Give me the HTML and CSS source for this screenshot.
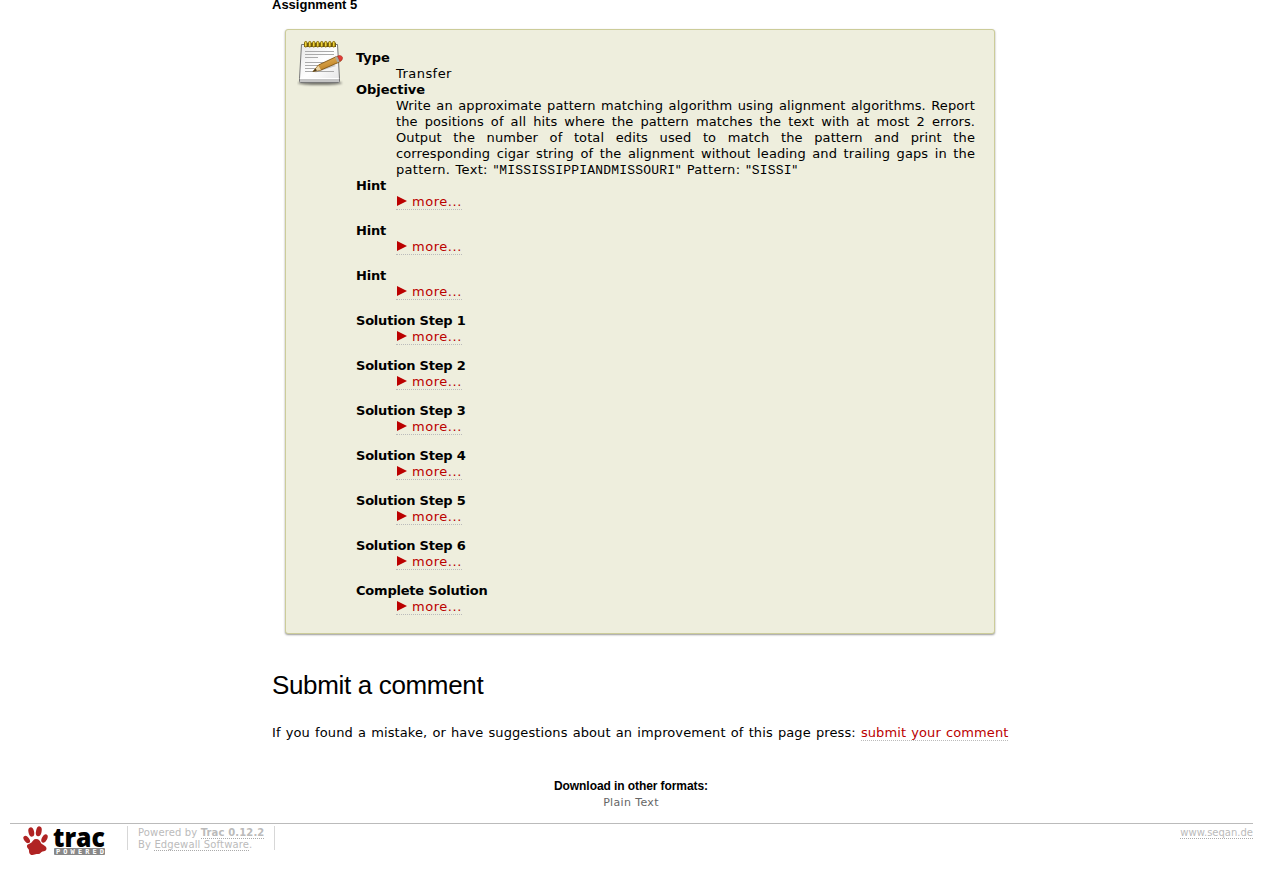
FILE: index.html
```html
<!DOCTYPE html>
<html lang="en">
<head>
<meta charset="utf-8">
<title>Assignment 5</title>
<link rel="stylesheet" href="styles.css">
</head>
<body>
<main class="content">
  <h4 class="assignment-title">Assignment 5</h4>
  <section class="box">
    <svg class="note" width="48" height="48" viewBox="0 0 48 48">
      <defs>
        <linearGradient id="paper" x1="0" y1="0" x2="1" y2="1"><stop offset="0" stop-color="#e6e6e6"/><stop offset=".5" stop-color="#fff"/><stop offset="1" stop-color="#e4e4e4"/></linearGradient>
        <linearGradient id="wood" x1="0" y1="0" x2=".5" y2="1"><stop offset="0" stop-color="#efc069"/><stop offset="1" stop-color="#b87a1d"/></linearGradient>
        <filter id="soft" x="-20%" y="-80%" width="140%" height="260%"><feGaussianBlur stdDeviation="1"/></filter>
      </defs>
      <ellipse cx="23" cy="43" rx="22" ry="2" fill="#000" opacity=".5" filter="url(#soft)"/>
      <path d="M4.500 4.500h36l2 34v3q0 1-1 1h-38q-1 0-1-1v-3z" fill="url(#paper)" stroke="#777"/>
      <path d="M3 39h39v3H3z" fill="#c4c4c4"/>
      <path d="M3.500 38.500h38" stroke="#fff"/>
      <path d="M8 11.500h29M8 14.500h29M8 17.500h13M8 22.500h23M8 25.500h18M8 28.500h12M8 31.500h29" stroke="#aaa"/>
      <path d="M7 3h32v4H7z" fill="#604d10"/>
      <g fill="#f0d43a" stroke="#81680c" stroke-width="1">
        <rect x="7.500" y="1.500" width="2.500" height="5.500" rx="1.200"/><rect x="11.500" y="1.500" width="2.500" height="5.500" rx="1.200"/><rect x="15.500" y="1.500" width="2.500" height="5.500" rx="1.200"/><rect x="19.500" y="1.500" width="2.500" height="5.500" rx="1.200"/><rect x="23.500" y="1.500" width="2.500" height="5.500" rx="1.200"/><rect x="27.500" y="1.500" width="2.500" height="5.500" rx="1.200"/><rect x="31.500" y="1.500" width="2.500" height="5.500" rx="1.200"/><rect x="35.500" y="1.500" width="2.500" height="5.500" rx="1.200"/>
      </g>
      <path d="M17 33l22-7-4-2z" fill="#000" opacity=".18"/>
      <path d="M16 31.500l5.500-6.500 18-8.500q4-1 5 1.500 .5 2.500-2 4L24 30z" fill="url(#wood)" stroke="#805514" stroke-width=".9"/>
      <path d="M16 31.500l5.500-6 2.500 4.500z" fill="#ead3a2"/>
      <path d="M15.500 32l3-3.500 1.500 2z" fill="#4c3a18"/>
      <path d="M38 17l2.500-.9 2.300 5.400-2.500 1z" fill="#aaa9a0"/>
      <path d="M40.500 16q4-1.300 5 1.500 .5 2.600-2.600 3.800z" fill="#e13a37" stroke="#a32" stroke-width=".6"/>
    </svg>
    <dl class="steps">
      <dt class="wide">Type</dt><dd class="type">Transfer</dd>
      <dt class="wide">Objective</dt>
      <dd class="objective">
        <span class="line">Write an approximate pattern matching algorithm using alignment algorithms. Report</span>
        <span class="line">the positions of all hits where the pattern matches the text with at most 2 errors.</span>
        <span class="line">Output the number of total edits used to match the pattern and print the</span>
        <span class="line">corresponding cigar string of the alignment without leading and trailing gaps in the</span>
        <span class="last">pattern. Text: "<code>MISSISSIPPIANDMISSOURI</code>" Pattern: "<code>SISSI</code>"</span>
      </dd>
      <dt>Hint</dt><dd class="fold"><a class="more">more...</a></dd>
      <dt>Hint</dt><dd class="fold"><a class="more">more...</a></dd>
      <dt>Hint</dt><dd class="fold"><a class="more">more...</a></dd>
      <dt>Solution Step 1</dt><dd class="fold"><a class="more">more...</a></dd>
      <dt>Solution Step 2</dt><dd class="fold"><a class="more">more...</a></dd>
      <dt>Solution Step 3</dt><dd class="fold"><a class="more">more...</a></dd>
      <dt>Solution Step 4</dt><dd class="fold"><a class="more">more...</a></dd>
      <dt>Solution Step 5</dt><dd class="fold"><a class="more">more...</a></dd>
      <dt>Solution Step 6</dt><dd class="fold"><a class="more">more...</a></dd>
      <dt>Complete Solution</dt><dd class="fold"><a class="more">more...</a></dd>
    </dl>
  </section>
  <h1 class="submit-title">Submit a comment</h1>
  <p class="submit">If you found a mistake, or have suggestions about an improvement of this page press: <a class="link">submit your comment</a></p>
</main>
<div class="formats">
  <h3 class="formats-title">Download in other formats:</h3>
  <a class="plain">Plain Text</a>
</div>
<footer class="footer">
  <svg class="logo" width="84" height="32" viewBox="0 0 84 32">
    <g fill="#b02323">
      <path d="M13 14c3 0 4 2 5 4 1.200 2 5.500 2.500 5.500 5.500 0 2.200-2 3-4 3-1.500.2-2 3-5 2.500-2-.5-3 .8-5 1-3 .2-3.500-2.500-3.500-4.500s-2.500-2.500-2-5c.5-1.800 3-1.500 4.500-3s2-3.500 4.500-3.500z"/>
      <ellipse cx="8.300" cy="7" rx="2.800" ry="4.700" transform="rotate(-14 8.300 7)"/>
      <ellipse cx="15.800" cy="6.300" rx="2.800" ry="5" transform="rotate(12 15.800 6.300)"/>
      <ellipse cx="3.700" cy="14.500" rx="2.500" ry="4.200" transform="rotate(-38 3.700 14.500)"/>
      <ellipse cx="21.500" cy="13.500" rx="2.600" ry="4.500" transform="rotate(28 21.500 13.500)"/>
    </g>
    <text class="logo-name" x="30" y="21.500" textLength="52" lengthAdjust="spacingAndGlyphs">trac</text>
    <rect x="31" y="23" width="51" height="7" rx="1" fill="#888"/>
    <text class="logo-tag" x="33" y="29" textLength="48">POWERED</text>
  </svg>
  <p class="powered">Powered by <a class="dotted"><b>Trac 0.12.2</b></a><br>By <a class="dotted">Edgewall Software</a>.</p>
  <p class="site"><a class="dotted">www.seqan.de</a></p>
</footer>
</body>
</html>
```
FILE: styles.css
```css
body { margin: 0; background: #fff; color: #000; font: 13px/16px "DejaVu Sans", sans-serif; height: 869px; overflow: hidden; }
h1, h3, h4, p, dl, dd { margin: 0; }
.content { width: 740px; margin-left: 272px; }
.assignment-title { font: bold 13px/15px "Liberation Sans", Arial, sans-serif; padding-bottom: 17px; margin-top: -3px; }
.box { box-sizing: border-box; display: flex; width: 710px; height: 605px; margin-left: 13px; padding: 9px 19px 0 11px; border: 1px solid #cc9; border-radius: 3px; background: #eed; box-shadow: 0 1px 2px #999; }
.note { flex: none; margin: 1px 11px 0 0; }
.steps { flex: 1; padding-top: 11px; }
dt { font-weight: bold; white-space: nowrap; letter-spacing: -.21px; }
.wide { letter-spacing: -.02px; }
dd { margin-left: 40px; white-space: nowrap; }
.type { letter-spacing: .45px; }
.objective { letter-spacing: .3px; word-spacing: .8px; }
.line { display: block; text-align-last: justify; white-space: normal; letter-spacing: .1px; word-spacing: 0; }
.last { display: block; }
code { font: 13px/13px "Liberation Mono", monospace; letter-spacing: .2px; }
.fold { height: 16px; margin-bottom: 13px; letter-spacing: .55px; }
.more, .link { color: #b00; border-bottom: 1px dotted #bbb; }
.more::before { content: ""; display: inline-block; margin: 0 5px 0 1px; border-style: solid; border-width: 5.5px 0 5.5px 10px; border-color: transparent #b00; }
.submit-title { font: 26px/30px "Liberation Sans", Arial, sans-serif; letter-spacing: -.34px; margin-top: 36px; }
.submit { margin-top: 25px; white-space: nowrap; letter-spacing: .1px; word-spacing: .9px; }
.formats { margin-top: 37px; padding-right: 1px; text-align: center; }
.formats-title { font: bold 12px/16px "Liberation Sans", Arial, sans-serif; letter-spacing: -.08px; }
.plain { display: block; font-size: 11px; line-height: 16px; color: #666; letter-spacing: .35px; padding-top: 1px; }
.footer { display: flex; margin: 12px 10px 0; border-top: 1px solid #bbb; padding-top: 2px; color: #bbb; font-size: 10px; line-height: 12px; }
.logo { margin: -1px 20px 0 13px; }
.logo-name { font: 800 27px "Open Sans", sans-serif; fill: #000; }
.logo-tag { font: bold 7px "DejaVu Sans Mono", monospace; fill: #fff; }
.powered { height: 23px; padding: 1px 10px 0; border: solid #d7d7d7; border-width: 0 1px; white-space: nowrap; letter-spacing: .14px; }
.dotted { border-bottom: 1px dotted #aaa; }
.site { margin-left: auto; padding-top: 1px; }
```
